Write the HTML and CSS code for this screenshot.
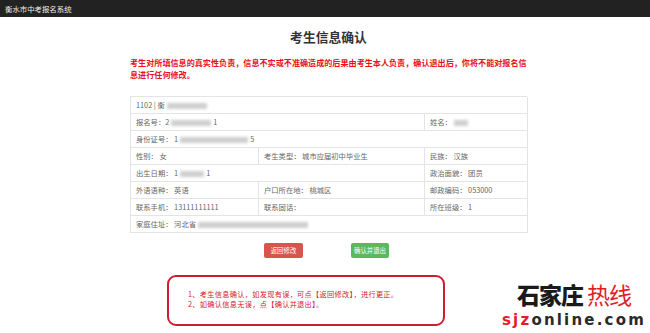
FILE: index.html
```html
<!DOCTYPE html>
<html lang="zh-CN">
<head>
<meta charset="utf-8">
<title>考生信息确认</title>
<link rel="stylesheet" href="styles.css">
</head>
<body>
<header class="topbar">衡水市中考报名系统</header>
<main class="main">
  <h1 class="title">考生信息确认</h1>
  <p class="warn">考生对所填信息的真实性负责，信息不实或不准确造成的后果由考生本人负责，确认退出后，你将不能对报名信息进行任何修改。</p>
  <div class="grid">
    <div class="cell span3">1102 | 衡<span class="blur w50"></span></div>
    <div class="cell span2">报名号：2<span class="blur w40"></span>1</div>
    <div class="cell">姓名：<span class="blur w14"></span></div>
    <div class="cell span3">身份证号： 1<span class="blur w70"></span>5</div>
    <div class="cell">性别： 女</div>
    <div class="cell">考生类型： 城市应届初中毕业生</div>
    <div class="cell">民族： 汉族</div>
    <div class="cell span2">出生日期： 1<span class="blur w24"></span>1</div>
    <div class="cell">政治面貌： 团员</div>
    <div class="cell">外语语种： 英语</div>
    <div class="cell">户口所在地： 桃城区</div>
    <div class="cell">邮政编码： 053000</div>
    <div class="cell">联系手机： 13111111111</div>
    <div class="cell">联系固话：</div>
    <div class="cell">所在班级： 1</div>
    <div class="cell span3">家庭住址： 河北省<span class="blur w130"></span></div>
  </div>
  <div class="actions">
    <button class="btn btn-red">返回修改</button>
    <button class="btn btn-green">确认并退出</button>
  </div>
</main>
<div class="note">
  <p>1、考生信息确认，如发现有误，可点【返回修改】，进行更正。</p>
  <p>2、如确认信息无误，点【确认并退出】。</p>
</div>
<div class="logo">
  <div class="logo-cn"><span class="logo-black">石家庄</span><span class="logo-red">热线</span></div>
  <div class="logo-en"><span class="logo-sjz">sjz</span>online.com</div>
</div>
</body>
</html>
```
FILE: styles.css
```css
* { box-sizing: border-box; }
html, body { margin: 0; padding: 0; }
body {
  width: 650px;
  height: 333px;
  overflow: hidden;
  position: relative;
  background: #fff;
  font-family: "Noto Sans CJK SC", "Noto Sans", sans-serif;
  color: #555;
}
.topbar {
  height: 17px;
  background: #222;
  color: #eee;
  font-size: 7.4px;
  line-height: 17px;
  padding-left: 5px;
}
.main {
  width: 397px;
  margin-left: 130px;
}
.title {
  margin: 0;
  padding-top: 12px;
  height: 40px;
  font-size: 12.8px;
  line-height: 16px;
  text-align: center;
  color: #333;
  font-weight: bold;
}
.warn {
  margin: 0;
  width: 400px;
  font-size: 8.1px;
  line-height: 12px;
  font-weight: bold;
  color: #e8101c;
  height: 39px;
}
.grid {
  display: grid;
  grid-template-columns: 128px 166px 103px;
  grid-auto-rows: 17px;
  border-top: 1px solid #e4e4e4;
  border-left: 1px solid #e4e4e4;
}
.cell {
  border-right: 1px solid #e4e4e4;
  border-bottom: 1px solid #e4e4e4;
  font-size: 7.3px;
  line-height: 16px;
  padding-left: 5px;
  color: #666;
  white-space: nowrap;
  overflow: hidden;
}
.span2 { grid-column: span 2; }
.span3 { grid-column: span 3; }
.blur {
  display: inline-block;
  height: 6px;
  background: #cfcfcf;
  filter: blur(1.5px);
  vertical-align: middle;
  margin: 0 2px;
}
.w14 { width: 14px; }
.w24 { width: 24px; }
.w40 { width: 40px; }
.w50 { width: 40px; }
.w70 { width: 68px; }
.w130 { width: 110px; }
.actions {
  display: flex;
  gap: 48px;
  margin-top: 10px;
  margin-left: 134px;
}
.btn {
  height: 15px;
  border: 0;
  border-radius: 2px;
  color: #fff;
  font-family: inherit;
  font-size: 6.4px;
  padding: 0;
  line-height: 15px;
}
.btn-red { width: 39px; background: #d9534f; }
.btn-green { width: 38px; background: #5cb85c; }
.note {
  position: absolute;
  left: 167px;
  top: 275px;
  width: 278px;
  height: 51px;
  border: 2px solid #cf1c33;
  border-radius: 9px;
  padding: 13px 0 0 19px;
  color: #d2202a;
  font-size: 7.2px;
  line-height: 9.5px;
  letter-spacing: 0.3px;
}
.note p { margin: 0; }
.logo {
  position: absolute;
  left: 500px;
  top: 281px;
  width: 148px;
  background: #fff;
  text-align: center;
}
.logo-cn {
  font-size: 23px;
  line-height: 27px;
  height: 31px;
  font-weight: 900;
  letter-spacing: -1px;
}
.logo-black { color: #1a1a1a; }
.logo-red { color: #e21d2a; font-weight: 400; margin-left: 4px; }
.logo-en {
  font-family: "DejaVu Sans", sans-serif;
  font-weight: bold;
  font-size: 15px;
  line-height: 17px;
  color: #2a2a2a;
  letter-spacing: 2.2px;
}
.logo-sjz { color: #e21d2a; }
```
